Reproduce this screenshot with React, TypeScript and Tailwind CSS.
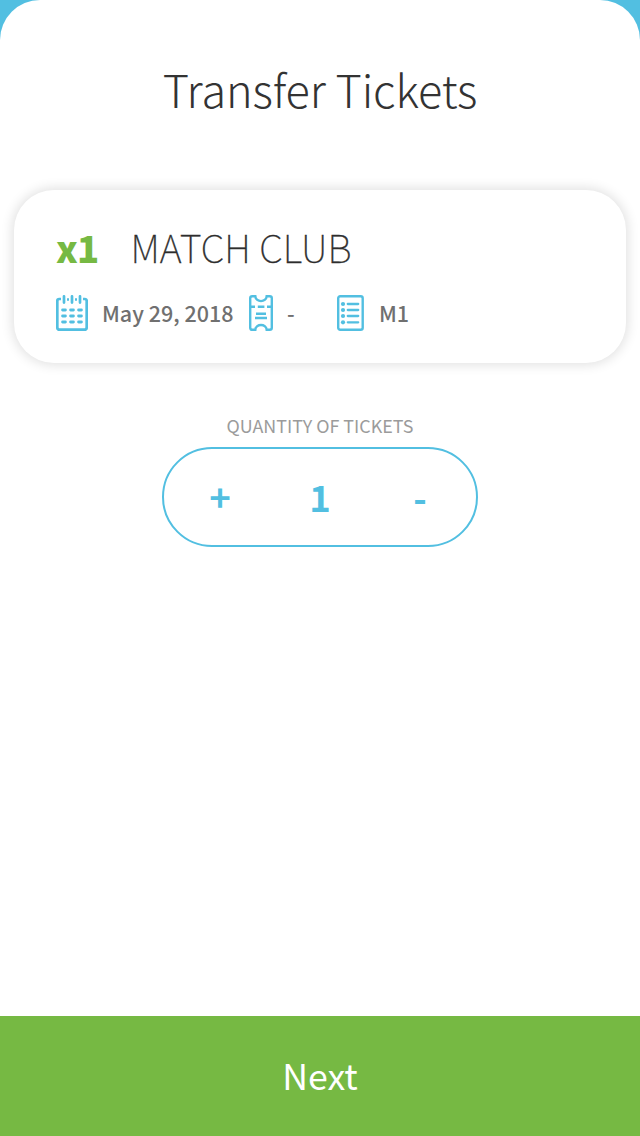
import React from 'react';

function CalendarIcon() {
  return (
    <svg width="32" height="36" viewBox="0 0 32 36" fill="none" stroke="#52bfe1" className="block shrink-0">
      <path d="M5 4H3.2Q1.3 4 1.3 6V32.3Q1.3 34.6 3.4 34.6H28.6Q30.7 34.6 30.7 32.3V6Q30.7 4 28.8 4H27M11 4.5H13M19 4.5H21" strokeWidth="2.7" />
      <path d="M8 1.3V7.6M16 1.3V7.6M24 1.3V7.6" strokeWidth="2.7" strokeLinecap="round" />
      <path d="M6.6 15H9.4M14.6 15H17.4M22.6 15H25.4M6.6 21H9.4M14.6 21H17.4M22.6 21H25.4M6.6 27H9.4M14.6 27H17.4M22.6 27H25.4" strokeWidth="2.9" strokeLinecap="round" />
    </svg>
  );
}

function TicketIcon() {
  return (
    <svg width="24" height="36" viewBox="0 0 24 36" fill="none" stroke="#52bfe1" strokeWidth="2.4" className="block shrink-0">
      <path d="M3.2 1.2H6.3C6.8 7.7 17.2 7.7 17.7 1.2H20.8Q22.8 1.2 22.8 3.2V32.8Q22.8 34.8 20.8 34.8H17.7C17.2 28.3 6.8 28.3 6.3 34.8H3.2Q1.2 34.8 1.2 32.8V3.2Q1.2 1.2 3.2 1.2Z" />
      <path d="M1.5 11.7H6M8.8 11.7H15.4M18 11.7H22.5M7 18.8H17M6 23H18" />
    </svg>
  );
}

function ListIcon() {
  return (
    <svg width="27" height="36" viewBox="0 0 27 36" fill="none" stroke="#52bfe1" className="block shrink-0">
      <rect x="1.2" y="1.2" width="24.5" height="33.6" rx="2" strokeWidth="2.4" />
      <path d="M10.8 9H21.2M10.8 15H21.2M10.8 21H21.2M10.8 27.3H21.2" strokeWidth="2.3" strokeLinecap="round" />
      <g fill="#52bfe1" stroke="none">
        <circle cx="6" cy="9" r="2.1" />
        <circle cx="6" cy="15" r="2.1" />
        <circle cx="6" cy="21" r="2.1" />
        <circle cx="6" cy="27.3" r="2.1" />
      </g>
    </svg>
  );
}

export default function App() {
  return (
    <div className="h-[1136px] w-[640px] bg-[#52bfe1] font-['Noto_Sans_CJK_SC',sans-serif]">
      <main className="flex h-full flex-col items-center overflow-hidden rounded-t-[40px] bg-white">
        <h1 className="mt-[59px] h-[60px] text-[45px] leading-[60px] font-light tracking-[-0.12px] whitespace-nowrap text-[#333333]">
          Transfer Tickets
        </h1>

        <section className="mt-[71px] flex h-[173px] w-[612px] flex-col rounded-[40px] bg-white pl-[42px] shadow-[0_0_12px_2px_rgba(0,0,0,0.12)]">
          <div className="mt-[32px] flex h-[50px] items-center leading-[50px] whitespace-nowrap">
            <span className="w-[74.5px] pt-[2px] text-[36.5px] font-black tracking-[-0.8px] text-[#76b943]">x1</span>
            <span className="text-[38px] font-thin text-[#2d2d2d] [-webkit-text-stroke:0.35px_#2d2d2d]">MATCH CLUB</span>
          </div>
          <div className="mt-[23px] flex h-[36px] items-center text-[21.5px] leading-[36px] font-medium whitespace-nowrap text-[#707070]">
            <CalendarIcon />
            <span className="ml-[14px] w-[147px]">May 29, 2018</span>
            <TicketIcon />
            <span className="ml-[14px] w-[50px]">-</span>
            <ListIcon />
            <span className="ml-[15px]">M1</span>
          </div>
        </section>

        <p className="mt-[49px] h-[26px] text-[17.9px] leading-[26px] whitespace-nowrap text-[#9b9b9b]">QUANTITY OF TICKETS</p>
        <div className="mt-[9px] grid h-[100px] w-[316px] shrink-0 grid-cols-[100px_100px_100px] content-center justify-center rounded-full border-2 border-[#52bfe1] text-center text-[36.5px] leading-[60px] font-bold text-[#52bfe1]">
          <button type="button">+</button>
          <span>1</span>
          <button type="button">-</button>
        </div>

        <button type="button" className="mt-auto h-[120px] w-full shrink-0 bg-[#76b943] pb-[2px] text-[35.7px] leading-[118px] text-white">
          Next
        </button>
      </main>
    </div>
  );
}
